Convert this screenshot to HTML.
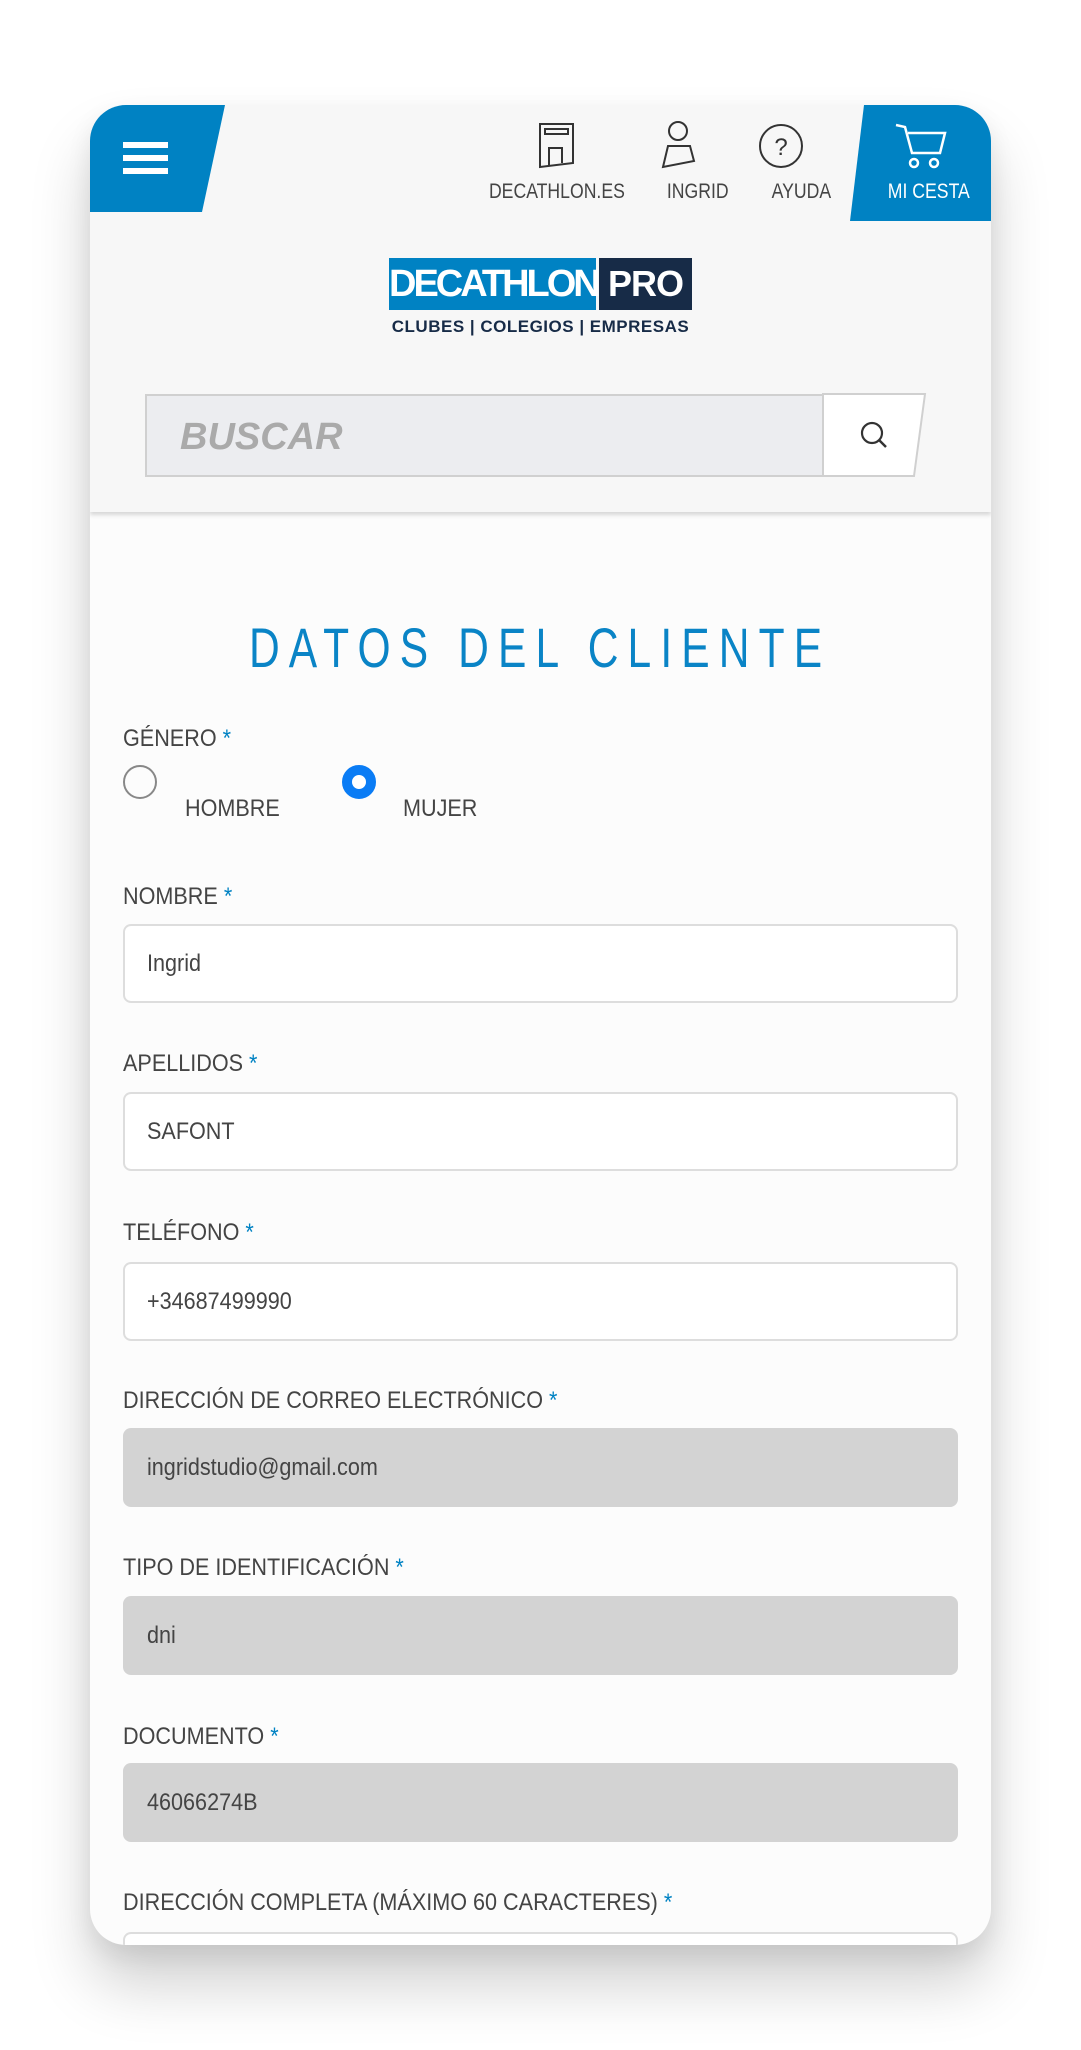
<!DOCTYPE html>
<html><head><meta charset="utf-8"><style>
*{margin:0;padding:0;box-sizing:border-box}
body{width:1081px;height:2050px;background:#fff;font-family:"Liberation Sans",sans-serif;position:relative;overflow:hidden}
.card{position:absolute;left:90px;top:105px;width:901px;height:1840px;border-radius:36px;overflow:hidden;background:#fcfcfc;box-shadow:0 40px 60px rgba(0,0,0,.18),0 10px 25px rgba(0,0,0,.08)}
.hdr{position:absolute;left:0;top:0;width:901px;height:407px;background:#f7f7f7;box-shadow:0 3px 4px rgba(0,0,0,.15)}
.c{display:inline-block;transform:scaleX(.9);transform-origin:left center;white-space:nowrap}
.ab{position:absolute}
.nav{position:absolute;top:75px;font-size:21px;color:#444;text-align:center;width:160px;margin-left:-80px}
.nav span{display:inline-block;transform:scaleX(.84);white-space:nowrap}
.lbl{position:absolute;left:33px;font-size:24px;color:#444}
.lbl b{color:#0082c3;font-weight:normal}
.inp{position:absolute;left:33px;width:835px;height:79px;border:2px solid #ddd;border-radius:8px;background:#fff;font-size:24px;color:#444;padding-left:22px;line-height:75px}
.inp.g{background:#d3d3d3;border-color:#d3d3d3}
</style></head><body>
<div class="card">
 <div class="hdr">
  <svg class="ab" style="left:0;top:0" width="140" height="110"><polygon points="0,0 135,0 112,107 0,107" fill="#0082c3"/><rect x="33" y="37" width="45" height="6" fill="#fff"/><rect x="33" y="50" width="45" height="6" fill="#fff"/><rect x="33" y="63" width="45" height="6" fill="#fff"/></svg>
  <svg class="ab" style="left:760px;top:0" width="141" height="117"><polygon points="14,0 141,0 141,116 0,116" fill="#0082c3"/>
   <g fill="none" stroke="#fff" stroke-width="2.5"><path d="M46 20 L55 22 L62 48 L90 48 L95 28 L58 28"/><circle cx="64" cy="58" r="4"/><circle cx="84" cy="58" r="4"/></g></svg>
  <svg class="ab" style="left:445px;top:16px" width="300" height="52" fill="none" stroke="#333" stroke-width="2">
   <path d="M5 3 H38 V42 L5 46 Z"/><rect x="10" y="8" width="23" height="5"/><path d="M14 44 V27 H27 V42"/>
   <circle cx="143" cy="10" r="9"/><path d="M133 25 H155 L159 40 L128 46 Z"/>
   <circle cx="246" cy="25" r="21"/><text x="246" y="34" font-size="24" text-anchor="middle" fill="#333" stroke="none" font-family="Liberation Sans">?</text>
  </svg>
  <div class="nav" style="left:466px"><span>DECATHLON.ES</span></div>
  <div class="nav" style="left:608px"><span>INGRID</span></div>
  <div class="nav" style="left:711px"><span>AYUDA</span></div>
  <div class="nav" style="left:839px;color:#fff"><span>MI CESTA</span></div>
  <div class="ab" style="left:299px;top:153px;width:207px;height:52px;background:#0082c3;color:#fff;font-weight:bold;font-size:38px;line-height:52px;text-align:center;letter-spacing:-3px">DECATHLON</div>
  <div class="ab" style="left:509px;top:153px;width:93px;height:52px;background:#172b47;color:#fff;font-weight:bold;font-size:36px;line-height:52px;text-align:center;letter-spacing:-1px">PRO</div>
  <div class="ab" style="left:299px;top:212px;width:303px;font-size:17px;font-weight:bold;color:#172b47;text-align:center;letter-spacing:.5px;white-space:nowrap">CLUBES | COLEGIOS | EMPRESAS</div>
  <svg class="ab" style="left:55px;top:288px" width="790" height="86"><rect x="1" y="2" width="677" height="81" fill="#ecedf0" stroke="#d0d0d0" stroke-width="2"/><polygon points="678,1 780,1 769,83 678,83" fill="#fff" stroke="#d0d0d0" stroke-width="2"/><circle cx="727" cy="40" r="10" fill="none" stroke="#333" stroke-width="2.2"/><path d="M734 47 L741 54" stroke="#333" stroke-width="2.5"/><text x="35" y="56" font-family="Liberation Sans" font-weight="bold" font-style="italic" font-size="38" fill="#aaa">BUSCAR</text></svg>
 </div>
 <div class="ab" style="left:0;top:510px;width:901px;text-align:center;font-size:56px;color:#0a84c6;letter-spacing:12px;font-weight:300"><span style="display:inline-block;transform:scaleX(.76)">DATOS DEL CLIENTE</span></div>
 <div class="lbl" style="top:620px"><span class="c">GÉNERO <b>*</b></span></div>
 <div class="ab" style="left:33px;top:660px;width:34px;height:34px;border-radius:50%;border:2.5px solid #888"></div>
 <div class="lbl" style="left:95px;top:690px"><span class="c">HOMBRE</span></div>
 <div class="ab" style="left:252px;top:660px;width:34px;height:34px;border-radius:50%;border:10px solid #0a7cf5;background:#fff"></div>
 <div class="lbl" style="left:313px;top:690px"><span class="c">MUJER</span></div>
 <div class="lbl" style="top:778px"><span class="c">NOMBRE <b>*</b></span></div>
 <div class="inp" style="top:819px"><span class="c">Ingrid</span></div>
 <div class="lbl" style="top:945px"><span class="c">APELLIDOS <b>*</b></span></div>
 <div class="inp" style="top:987px"><span class="c">SAFONT</span></div>
 <div class="lbl" style="top:1114px"><span class="c">TELÉFONO <b>*</b></span></div>
 <div class="inp" style="top:1157px"><span class="c">+34687499990</span></div>
 <div class="lbl" style="top:1282px"><span class="c">DIRECCIÓN DE CORREO ELECTRÓNICO <b>*</b></span></div>
 <div class="inp g" style="top:1323px"><span class="c">ingridstudio@gmail.com</span></div>
 <div class="lbl" style="top:1449px"><span class="c">TIPO DE IDENTIFICACIÓN <b>*</b></span></div>
 <div class="inp g" style="top:1491px"><span class="c">dni</span></div>
 <div class="lbl" style="top:1618px"><span class="c">DOCUMENTO <b>*</b></span></div>
 <div class="inp g" style="top:1658px"><span class="c">46066274B</span></div>
 <div class="lbl" style="top:1784px"><span class="c">DIRECCIÓN COMPLETA (MÁXIMO 60 CARACTERES) <b>*</b></span></div>
 <div class="inp" style="top:1827px"></div>
</div>
</body></html>
